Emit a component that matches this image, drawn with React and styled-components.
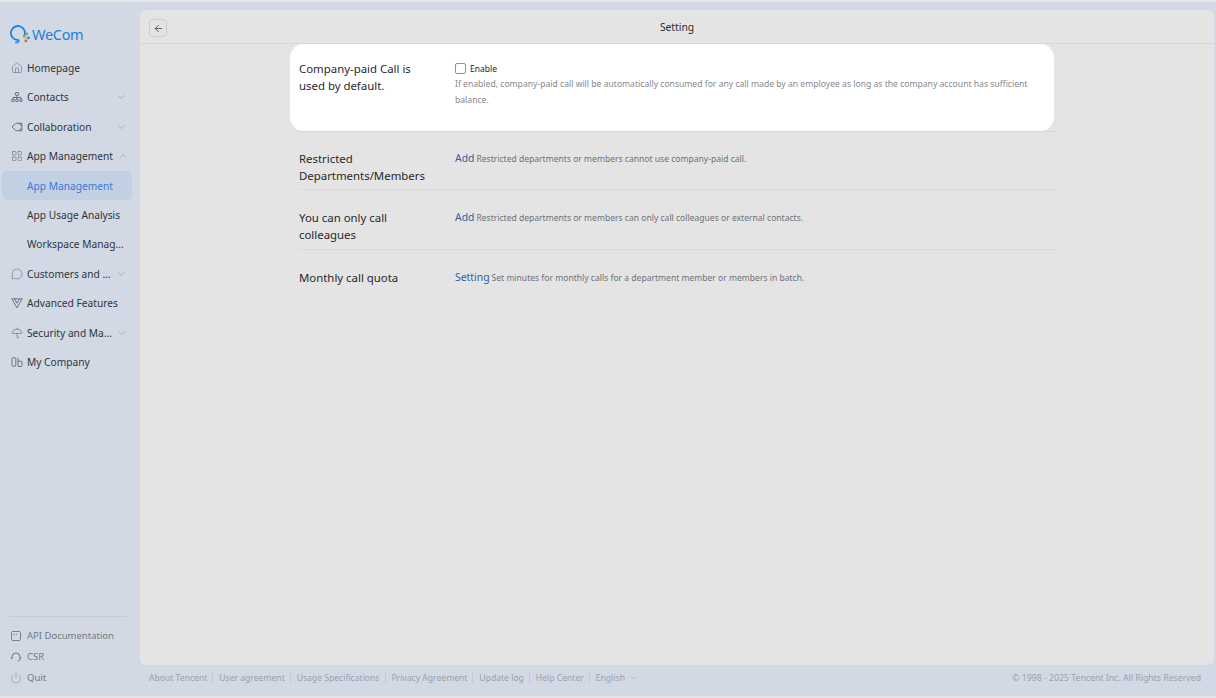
import React from 'react'
import styled, { createGlobalStyle } from 'styled-components'
import { House, LayoutGrid, MessageCircle, Umbrella, ChevronDown, ChevronUp, Power, ArrowLeft } from 'lucide-react'

const GlobalStyle = createGlobalStyle`
  html, body { margin: 0; padding: 0; background: #e4e4e4; }
  body { font-family: "Noto Sans", "Open Sans", "Liberation Sans", sans-serif; }
`

const ContactsIcon = () => (
  <svg width="12" height="12" viewBox="0 0 12 12" fill="none" stroke="#5f6874" strokeWidth="0.9">
    <rect x="4.500" y="1.500" width="3" height="2.800" rx="0.500" />
    <path d="M6 4.300v2.200M2 8.200V6.500h8v1.700M6 6.500v1.700" />
    <rect x="0.800" y="8.200" width="2.400" height="2.300" rx="0.400" />
    <rect x="4.800" y="8.200" width="2.400" height="2.300" rx="0.400" />
    <rect x="8.800" y="8.200" width="2.400" height="2.300" rx="0.400" />
  </svg>
)

const CollabIcon = () => (
  <svg width="12" height="12" viewBox="0 0 12 12" fill="none" stroke="#5f6874" strokeWidth="0.9">
    <path d="M1 6l3.400-3.200a2 2 0 0 1 1.300-.5H10a.8.8 0 0 1 .8.8v5.800a.8.8 0 0 1-.8.8H5.700a2 2 0 0 1-1.300-.5z" />
    <circle cx="9.800" cy="3" r="1" fill="#d2d9e4" />
    <circle cx="9.800" cy="9" r="1" fill="#d2d9e4" />
  </svg>
)

const FeatureIcon = () => (
  <svg width="12" height="12" viewBox="0 0 12 12" fill="none" stroke="#5f6874" strokeWidth="0.9">
    <path d="M0.800 1.800h10.400L6 10.800z" />
    <path d="M3.500 1.800L6 6.200l2.500-4.400" />
  </svg>
)

const CompanyIcon = () => (
  <svg width="12" height="12" viewBox="0 0 12 12" fill="none" stroke="#5f6874" strokeWidth="0.9">
    <rect x="1" y="1.500" width="3.800" height="9" rx="1.800" />
    <path d="M7 1.500v9h3.200a.8.8 0 0 0 .8-.8V6a.8.8 0 0 0-.8-.8H7" />
  </svg>
)

const DocIcon = () => (
  <svg width="12" height="12" viewBox="0 0 12 12" fill="none" stroke="#6f7783" strokeWidth="0.9">
    <rect x="1.500" y="1.500" width="9" height="9" rx="1.200" />
    <path d="M3.500 4.500h1.500M6 4.500h1" />
  </svg>
)

const CsrIcon = () => (
  <svg width="12" height="12" viewBox="0 0 12 12" fill="none" stroke="#6f7783" strokeWidth="1">
    <path d="M2 7.500V6a4 4 0 0 1 8 0v1.500" />
    <path d="M10 7.500c0 1.500-1 2.500-2.500 2.500" />
    <path d="M1.500 6.200v1.600M10.500 6.200v1.600" strokeWidth="1.400" />
  </svg>
)

const Logo = () => (
  <svg width="23" height="19" viewBox="0 0 23 19" fill="none">
    <path d="M15 11.500A7 7 0 1 0 8.500 15c1 0 1.500.2 1 1.500-.3.700-1.500 1-2.500.8" stroke="#1b86e6" strokeWidth="1.800" strokeLinecap="round" />
    <rect x="14.500" y="10.500" width="2.800" height="2.800" rx="1" fill="#f0a52a" />
    <rect x="18" y="11.500" width="2.800" height="2.800" rx="1" fill="#2f8fe8" />
    <rect x="15.500" y="14.400" width="2.800" height="2.800" rx="1" fill="#e2603a" />
    <rect x="16.300" y="7.500" width="2.800" height="2.800" rx="1" fill="#6cbb4a" />
  </svg>
)

const Shell = styled.div`
  width: 1216px;
  height: 698px;
  box-sizing: border-box;
  padding-top: 2px;
  overflow: hidden;
`

const Frame = styled.div`
  height: 694px;
  display: flex;
  background: #d2d9e4;
`

const Sidebar = styled.aside`
  width: 140px;
  flex: none;
  display: flex;
  flex-direction: column;
  box-sizing: border-box;
  padding: 22px 0 8px;
`

const Brand = styled.div`
  display: flex;
  align-items: center;
  gap: 0;
  height: 20px;
  padding-left: 9px;
  margin-bottom: 9.400px;
  color: #1b7fdc;
  font-size: 14.500px;
  letter-spacing: -0.3px;
`

const Nav = styled.nav`
  display: flex;
  flex-direction: column;
  flex: 1;
`

const NavItem = styled.div`
  height: 29.400px;
  margin: 0 8px 0 2px;
  padding-left: 9px;
  display: flex;
  align-items: center;
  gap: 4px;
  color: ${p => (p.$active ? '#3b78d8' : '#2e343d')};
  background: ${p => (p.$active ? '#c2d0e3' : 'transparent')};
  border-radius: 5px;
  font-size: 10.200px;
  white-space: nowrap;
  svg { flex: none; }
`

const NavIcon = styled.span`
  width: 12px;
  height: 12px;
  display: flex;
  color: #5f6874;
`

const SubLabel = styled.span`
  margin-left: 16px;
`

const Caret = styled.span`
  margin-left: auto;
  margin-right: 5px;
  display: flex;
  color: #7d8694;
`

const BottomNav = styled.div`
  margin: 0 14px 0 10px;
  padding-top: 8px;
  border-top: 1px solid #c5ccd8;
  display: flex;
  flex-direction: column;
`

const BottomItem = styled.div`
  height: 21px;
  display: flex;
  align-items: center;
  gap: 5px;
  color: #737b88;
  font-size: 9.500px;
`

const Content = styled.div`
  flex: 1;
  display: flex;
  flex-direction: column;
  padding: 8px 2px 0 0;
  min-width: 0;
`

const Panel = styled.main`
  flex: none;
  height: 655px;
  background: #e4e4e4;
  border-radius: 6px;
`

const PanelHeader = styled.header`
  position: relative;
  height: 33px;
  display: flex;
  align-items: center;
  justify-content: center;
  border-bottom: 1px solid #d5d8dc;
  color: #2b2f36;
  font-size: 10.300px;
`

const BackButton = styled.button`
  position: absolute;
  left: 9px;
  top: 9px;
  width: 18px;
  height: 18px;
  padding: 0;
  display: flex;
  align-items: center;
  justify-content: center;
  background: transparent;
  border: 1px solid #c9ccd0;
  border-radius: 4px;
  color: #22262c;
`

const Settings = styled.section`
  width: 757px;
  margin-left: 159px;
`

const Row = styled.div`
  display: flex;
  box-sizing: border-box;
  height: ${p => p.$height}px;
  padding-top: ${p => p.$top}px;
  border-bottom: ${p => (p.$plain ? 'none' : '1px solid #d6d8db')};
`

const HighlightSection = styled.div`
  height: 88px;
  box-sizing: border-box;
  border-bottom: 1px solid #d6d8db;
`

const HighlightCard = styled.div`
  display: flex;
  height: 87px;
  box-sizing: border-box;
  margin: 0 2px 0 -9px;
  padding: 16px 0 0 9px;
  background: #fff;
  border-radius: 14px;
`

const RowLabel = styled.div`
  width: 156px;
  flex: none;
  box-sizing: border-box;
  padding-right: 20px;
  color: #26292e;
  font-size: 11.400px;
  line-height: 17px;
`

const RowBody = styled.div`
  flex: 1;
  min-width: 0;
  padding-right: 23px;
`

const EnableLine = styled.label`
  display: flex;
  align-items: center;
  gap: 4px;
  height: 12px;
  margin-top: 2px;
  color: #23262b;
  font-size: 8.500px;
`

const CheckBox = styled.span`
  width: 9px;
  height: 9px;
  border: 1px solid #8e9196;
  border-radius: 2px;
  background: #fff;
`

const Help = styled.p`
  margin: 2px 0 0;
  color: #85888d;
  font-size: 8.600px;
  line-height: 16px;
`

const ActionLine = styled.div`
  display: flex;
  align-items: baseline;
  gap: 2px;
  color: #6f7277;
  font-size: 8.550px;
  line-height: 17px;
`

const ActionLink = styled.a`
  color: #2f5f9e;
  font-size: 10.400px;
`

const Footer = styled.footer`
  flex: 1;
  display: flex;
  align-items: center;
  justify-content: space-between;
  padding: 0 13px 5px 9px;
  color: #9ba1ab;
  font-size: 8.600px;
`

const Copyright = styled.span`
  font-size: 8.730px;
`

const FooterLinks = styled.div`
  display: flex;
  align-items: center;
`

const FooterLink = styled.span`
  display: flex;
  align-items: center;
  gap: 4px;
  padding-right: 5px;
  margin-right: 5.900px;
  border-right: ${p => (p.$last ? 'none' : '1px solid #c3c9d3')};
  line-height: 10px;
`

const primary = [
  { label: 'Homepage', icon: <House size={12} strokeWidth={1.1} /> },
  { label: 'Contacts', icon: <ContactsIcon />, caret: 'down' },
  { label: 'Collaboration', icon: <CollabIcon />, caret: 'down' },
  { label: 'App Management', icon: <LayoutGrid size={12} strokeWidth={1.1} />, caret: 'up' },
  { label: 'App Management', sub: true, active: true },
  { label: 'App Usage Analysis', sub: true },
  { label: 'Workspace Manag...', sub: true },
  { label: 'Customers and ...', icon: <MessageCircle size={12} strokeWidth={1.1} />, caret: 'down' },
  { label: 'Advanced Features', icon: <FeatureIcon /> },
  { label: 'Security and Ma...', icon: <Umbrella size={12} strokeWidth={1.2} />, caret: 'down' },
  { label: 'My Company', icon: <CompanyIcon /> },
]

const footerLinks = ['About Tencent', 'User agreement', 'Usage Specifications', 'Privacy Agreement', 'Update log', 'Help Center']

export default function App() {
  return (
    <Shell>
      <GlobalStyle />
      <Frame>
        <Sidebar>
          <Brand><Logo />WeCom</Brand>
          <Nav>
            {primary.map((item, i) => (
              <NavItem key={i} $active={item.active}>
                {item.sub ? <SubLabel>{item.label}</SubLabel> : <><NavIcon>{item.icon}</NavIcon>{item.label}</>}
                {item.caret && (
                  <Caret>
                    {item.caret === 'down' ? <ChevronDown size={12} strokeWidth={1} /> : <ChevronUp size={12} strokeWidth={1} />}
                  </Caret>
                )}
              </NavItem>
            ))}
          </Nav>
          <BottomNav>
            <BottomItem><DocIcon />API Documentation</BottomItem>
            <BottomItem><CsrIcon />CSR</BottomItem>
            <BottomItem><Power size={12} strokeWidth={1} color="#6f7783" />Quit</BottomItem>
          </BottomNav>
        </Sidebar>
        <Content>
          <Panel>
            <PanelHeader>
              <BackButton><ArrowLeft size={11} strokeWidth={1.5} /></BackButton>
              Setting
            </PanelHeader>
            <Settings>
              <HighlightSection>
                <HighlightCard>
                  <RowLabel>Company-paid Call is used by default.</RowLabel>
                  <RowBody>
                    <EnableLine><CheckBox />Enable</EnableLine>
                    <Help>If enabled, company-paid call will be automatically consumed for any call made by an employee as long as the company account has sufficient balance.</Help>
                  </RowBody>
                </HighlightCard>
              </HighlightSection>
              <Row $height={58} $top={18}>
                <RowLabel>Restricted Departments/Members</RowLabel>
                <ActionLine><ActionLink>Add</ActionLink>Restricted departments or members cannot use company-paid call.</ActionLine>
              </Row>
              <Row $height={60} $top={19}>
                <RowLabel>You can only call colleagues</RowLabel>
                <ActionLine><ActionLink>Add</ActionLink>Restricted departments or members can only call colleagues or external contacts.</ActionLine>
              </Row>
              <Row $height={58} $top={19} $plain>
                <RowLabel>Monthly call quota</RowLabel>
                <ActionLine><ActionLink>Setting</ActionLink>Set minutes for monthly calls for a department member or members in batch.</ActionLine>
              </Row>
            </Settings>
          </Panel>
          <Footer>
            <FooterLinks>
              {footerLinks.map(l => <FooterLink key={l}>{l}</FooterLink>)}
              <FooterLink $last>English <ChevronDown size={8} strokeWidth={1.5} /></FooterLink>
            </FooterLinks>
            <Copyright>© 1998 - 2025 Tencent Inc. All Rights Reserved</Copyright>
          </Footer>
        </Content>
      </Frame>
    </Shell>
  )
}
